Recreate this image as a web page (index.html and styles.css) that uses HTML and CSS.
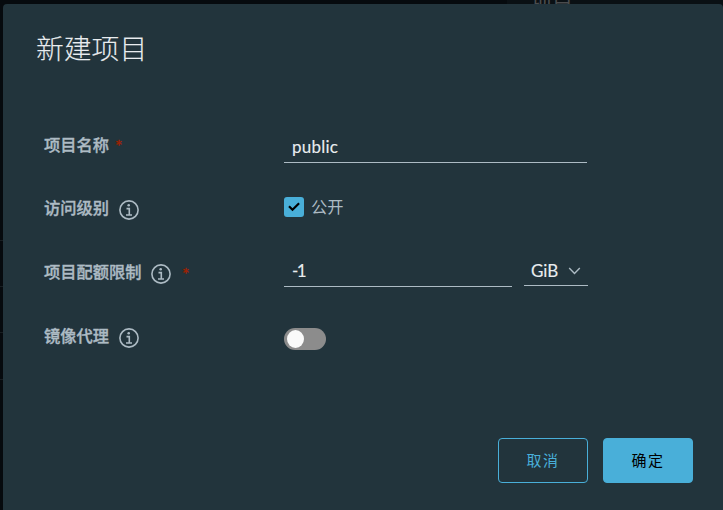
FILE: index.html
```html
<!DOCTYPE html>
<html lang="zh-CN">
<head>
<meta charset="utf-8">
<title>新建项目</title>
<link rel="stylesheet" href="styles.css">
</head>
<body>
<svg class="symbols" aria-hidden="true">
  <symbol id="info" viewBox="0 0 20 20">
    <circle cx="10" cy="10" r="9.1" fill="none" stroke="currentColor" stroke-width="1.6"/>
    <circle cx="9.7" cy="5.2" r="1.3" fill="currentColor"/>
    <path d="M7.5 8.6h2.8v6.2M7 15h6" fill="none" stroke="currentColor" stroke-width="1.6"/>
  </symbol>
</svg>
<div class="backdrop-title">项目</div>
<main class="modal">
  <h1 class="title">新建项目</h1>
  <form class="form">
    <div class="row">
      <div class="label first">项目名称<span class="required">*</span></div>
      <div class="field name">public</div>
    </div>
    <div class="row access">
      <div class="label">访问级别<svg class="info"><use href="#info"/></svg></div>
      <div class="check-line">
        <span class="checkbox"><svg viewBox="0 0 20 20"><path d="M5 9.3l3.5 3.5 6.6-6.5" fill="none" stroke="#000" stroke-width="2.2"/></svg></span>公开
      </div>
    </div>
    <div class="row quota">
      <div class="label">项目配额限制<svg class="info"><use href="#info"/></svg><span class="required far">*</span></div>
      <div class="quota-fields">
        <div class="field amount">-1</div>
        <div class="field unit">GiB<svg class="caret" viewBox="0 0 12 8"><path d="M.7 1l5.3 5.5L11.3 1" fill="none" stroke="currentColor" stroke-width="1.4"/></svg></div>
      </div>
    </div>
    <div class="row proxy">
      <div class="label">镜像代理<svg class="info"><use href="#info"/></svg></div>
      <span class="toggle"></span>
    </div>
  </form>
  <footer class="actions">
    <button class="btn outline" type="button">取消</button>
    <button class="btn primary" type="button">确定</button>
  </footer>
</main>
</body>
</html>
```
FILE: styles.css
```css
* { box-sizing: border-box; }
body {
  margin: 0;
  height: 510px;
  padding: 4px 0 0 3px;
  overflow: hidden;
  background:
    linear-gradient(#181e22, #181e22) 0 240px / 3px 1px no-repeat,
    linear-gradient(#181e22, #181e22) 0 286px / 3px 1px no-repeat,
    linear-gradient(#181e22, #181e22) 0 332px / 3px 1px no-repeat,
    linear-gradient(#181e22, #181e22) 0 379px / 3px 1px no-repeat,
    linear-gradient(90deg, #060a0e 507px, #0a1014 507px);
  font-family: Lato, "Noto Sans CJK SC", sans-serif;
  color: #adbbc4;
}
.symbols { position: absolute; width: 0; height: 0; }
.backdrop-title {
  position: absolute;
  left: 531px;
  top: -12px;
  font-size: 21px;
  line-height: 24px;
  color: #4a4c4e;
}
.modal {
  position: relative;
  display: flex;
  flex-direction: column;
  width: 720px;
  height: 506px;
  background: #22343c;
  border-radius: 4px 4px 0 0;
}
.title {
  margin: 25px 0 0 33px;
  font-size: 27.8px;
  line-height: 40px;
  font-weight: 300;
  color: #e9ecef;
  -webkit-text-stroke: .1px currentColor;
}
.form { margin: 54px 0 0 41px; }
.row {
  display: grid;
  grid-template-columns: 240px 304px;
  height: 64px;
  align-items: start;
}
.label {
  display: flex;
  align-items: center;
  height: 36px;
  margin-top: 3px;
  font-size: 16.25px;
  line-height: 24px;
  font-weight: 500;
  -webkit-text-stroke: .35px currentColor;
}
.label.first { margin-top: 4px; }
.required {
  margin: 3px 0 0 6px;
  color: #a32100;
  font-size: 18px;
  font-weight: 400;
  -webkit-text-stroke: .3px currentColor;
}
.first .required { margin-top: 1px; }
.required.far { margin-left: 11px; }
.info { width: 20px; height: 20px; margin: 3px 0 0 9.5px; }
.field {
  height: 31px;
  padding: 0 8px;
  border-bottom: 1px solid #adbbc4;
  font-size: 17px;
  line-height: 30px;
  color: #e9ecef;
  -webkit-text-stroke: .12px currentColor;
}
.name { width: 303px; margin-top: 9px; letter-spacing: .25px; }
.check-line {
  display: flex;
  align-items: center;
  gap: 7px;
  height: 20px;
  margin-top: 10px;
  font-size: 16.25px;
  line-height: 18px;
}
.checkbox { width: 20px; height: 20px; border-radius: 3px; background: #49afd9; }
.checkbox svg { display: block; }
.quota-fields { display: grid; grid-template-columns: 228px 64px; column-gap: 12px; margin-top: 5px; }
.amount { letter-spacing: -1.5px; line-height: 29px; }
.unit { display: flex; align-items: center; justify-content: space-between; height: 30px; padding: 0 7px; line-height: 27px; }
.caret { width: 13px; height: 8px; color: #adbbc4; }
.toggle {
  width: 42px;
  height: 22px;
  margin-top: 13px;
  padding: 2px 3px;
  border-radius: 11px;
  background: #8c8c8c;
}
.toggle::before {
  content: "";
  display: block;
  width: 17px;
  height: 18px;
  border-radius: 50%;
  background: #fafafa;
}
.actions { display: flex; justify-content: flex-end; gap: 15px; margin: auto 30px 27px 0; }
.btn {
  width: 90px;
  height: 45px;
  padding: 0 0 2px;
  border: 1px solid #49afd9;
  border-radius: 4px;
  font-family: inherit;
  font-size: 15px;
  letter-spacing: 1.4px;
  background: none;
  color: #49afd9;
}
.primary { background: #49afd9; color: #000; }
```
